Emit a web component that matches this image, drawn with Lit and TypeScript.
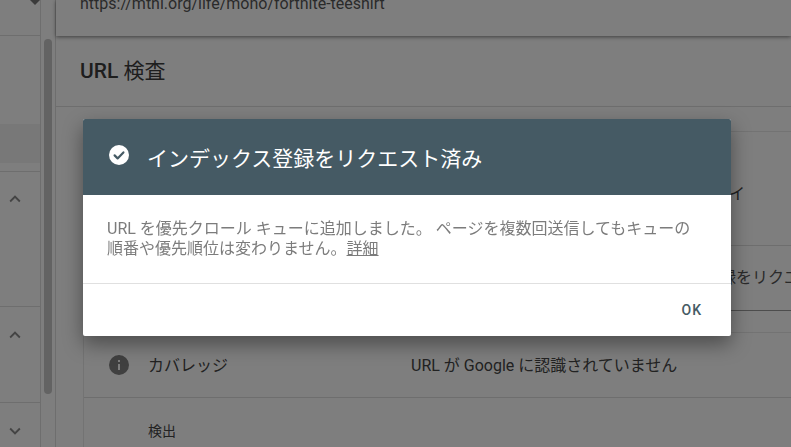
import { LitElement, html, css } from "lit";
import { customElement } from "lit/decorators.js";

@customElement("app-root")
export class AppRoot extends LitElement {
  static styles = css`
    :host { display: block; width: 791px; height: 447px; position: relative; overflow: hidden;
      font-family: Roboto, "Noto Sans CJK JP", sans-serif; background: #fdfdfd; color: #444; }
    .page { display: flex; height: 447px; }
    .side { width: 41px; border-right: 1px solid #dcdcdc; display: flex; flex-direction: column; flex: none; box-sizing: border-box; }
    .side-top { height: 36px; border-bottom: 1px solid #dcdcdc; box-sizing: border-box; position: relative; }
    .caret { position: absolute; left: 30px; top: 0; width: 0; height: 0; border: 5px solid transparent; border-top-color: #777; }
    .s1 { height: 88px; }
    .sel { height: 39px; background: #f0f0f0; }
    .s2 { height: 9px; border-bottom: 1px solid #dcdcdc; box-sizing: border-box; }
    .sec { border-bottom: 1px solid #dcdcdc; display: flex; justify-content: center; box-sizing: border-box; padding-right: 11px; }
    .s3 { height: 135px; padding-top: 16px; }
    .s4 { height: 96px; padding-top: 17px; }
    .s5 { flex: 1; border-bottom: 0; padding-top: 17px; }
    .chev { width: 22px; height: 22px; fill: #888; }
    .track { width: 15px; flex: none; border-right: 1px solid #dcdcdc; padding: 39px 3px 0 3px; box-sizing: border-box; }
    .thumb { width: 8px; height: 355px; border-radius: 4px; background: #c6c6c6; }
    .main { flex: 1; display: flex; flex-direction: column; min-width: 0; }
    .top { height: 36px; box-sizing: border-box; padding-left: 24px; font-size: 16px; line-height: 8px; color: #555; box-shadow: 0 1px 4px rgba(0,0,0,.5); flex: none; }
    .title { height: 71px; box-sizing: border-box; border-bottom: 1px solid #dcdcdc; padding: 22px 0 0 24px; font-size: 21px; font-weight: 500; line-height: 26px; flex: none; color: #3c3c3c; }
    .title span { font-weight: 400; }
    .body { flex: 1; padding: 24px 0 0 27px; min-height: 0; }
    .card { border: 1px solid #e6e6e6; border-right: 0; height: 400px; }
    .row { display: flex; align-items: center; border-bottom: 1px solid #dcdcdc; box-sizing: border-box; font-size: 16px; }
    .r1 { height: 114px; justify-content: flex-end; align-items: flex-start; padding: 48px 46px 0 0; }
    .r2 { height: 65px; padding-left: 636px; overflow: hidden; white-space: nowrap; border-bottom: 1px solid #9a9a9a; padding-bottom: 5px; color: #555; }
    .gap { height: 22px; border-bottom: 1px solid #e6e6e6; box-sizing: border-box; }
    .r3 { height: 65px; padding-left: 24px; padding-bottom: 3px; }
    .r3 svg { width: 24px; height: 24px; fill: #808080; flex: none; margin-top: 3px; margin-left: -1px; margin-right: 1px; }
    .r3 .lab { width: 279px; padding-left: 16px; box-sizing: border-box; flex: none; }
    .r4 { padding: 22px 0 0 64px; font-size: 14px; }
    .scrim { position: absolute; inset: 0; background: rgba(0,0,0,.5); }
    .dialog { position: absolute; left: 83px; top: 119px; width: 648px; height: 217px; background: #fff; border-radius: 2px;
      box-shadow: 0 8px 20px rgba(0,0,0,.4); display: flex; flex-direction: column; overflow: hidden; }
    .head { height: 76px; flex: none; background: #455a64; color: #fff; display: flex; align-items: center; padding: 0 24px; gap: 16px; font-size: 21px; box-sizing: border-box; }
    .head svg { width: 24px; height: 24px; flex: none; margin-top: -4px; }
    .head circle { fill: #fff; }
    .head path { fill: none; stroke: #455a64; stroke-width: 2.2; stroke-linecap: round; stroke-linejoin: round; }
    .head span { margin-top: -1px; }
    .msg { flex: 1; padding: 24px 36px 0 24px; font-size: 16px; line-height: 20px; color: #7c7c7c; will-change: opacity; }
    .msg a { color: #7c7c7c; text-decoration: underline; }
    .foot { height: 53px; flex: none; border-top: 1px solid #e0e0e0; display: flex; align-items: center; justify-content: flex-end; padding-right: 29px; font-size: 14px; font-weight: 500; letter-spacing: 1px; color: #455a64; box-sizing: border-box; }
  `;

  render() {
    const up = html`<svg class="chev" viewBox="0 0 24 24"><path d="M12 8l-6 6 1.41 1.41L12 10.83l4.59 4.58L18 14z"/></svg>`;
    const down = html`<svg class="chev" viewBox="0 0 24 24"><path d="M16.59 8.59L12 13.17 7.41 8.59 6 10l6 6 6-6z"/></svg>`;
    return html`
      <div class="page">
        <div class="side">
          <div class="side-top"><span class="caret"></span></div>
          <div class="s1"></div>
          <div class="sel"></div>
          <div class="s2"></div>
          <div class="sec s3">${up}</div>
          <div class="sec s4">${up}</div>
          <div class="sec s5">${down}</div>
        </div>
        <div class="track"><div class="thumb"></div></div>
        <div class="main">
          <div class="top">https://mthl.org/life/mono/fortnite-teeshirt</div>
          <div class="title">URL <span>検査</span></div>
          <div class="body">
            <div class="card">
              <div class="row r1">イ</div>
              <div class="row r2">録をリクエ</div>
              <div class="gap"></div>
              <div class="row r3">
                <svg viewBox="0 0 24 24"><path fill-rule="evenodd" d="M12 2a10 10 0 100 20 10 10 0 000-20zm1 15h-2v-6h2zm0-8h-2V7h2z"/></svg>
                <div class="lab">カバレッジ</div>
                <div>URL が Google に認識されていません</div>
              </div>
              <div class="r4">検出</div>
            </div>
          </div>
        </div>
      </div>
      <div class="scrim"></div>
      <div class="dialog" role="dialog">
        <div class="head">
          <svg viewBox="0 0 24 24"><circle cx="12" cy="12" r="10"/><path d="M7.6 12.4l3 3 5.8-6"/></svg>
          <span>インデックス登録をリクエスト済み</span>
        </div>
        <div class="msg">URL を優先クロール キューに追加しました。 ページを複数回送信してもキューの順番や優先順位は変わりません。<a>詳細</a></div>
        <div class="foot">OK</div>
      </div>
    `;
  }
}
